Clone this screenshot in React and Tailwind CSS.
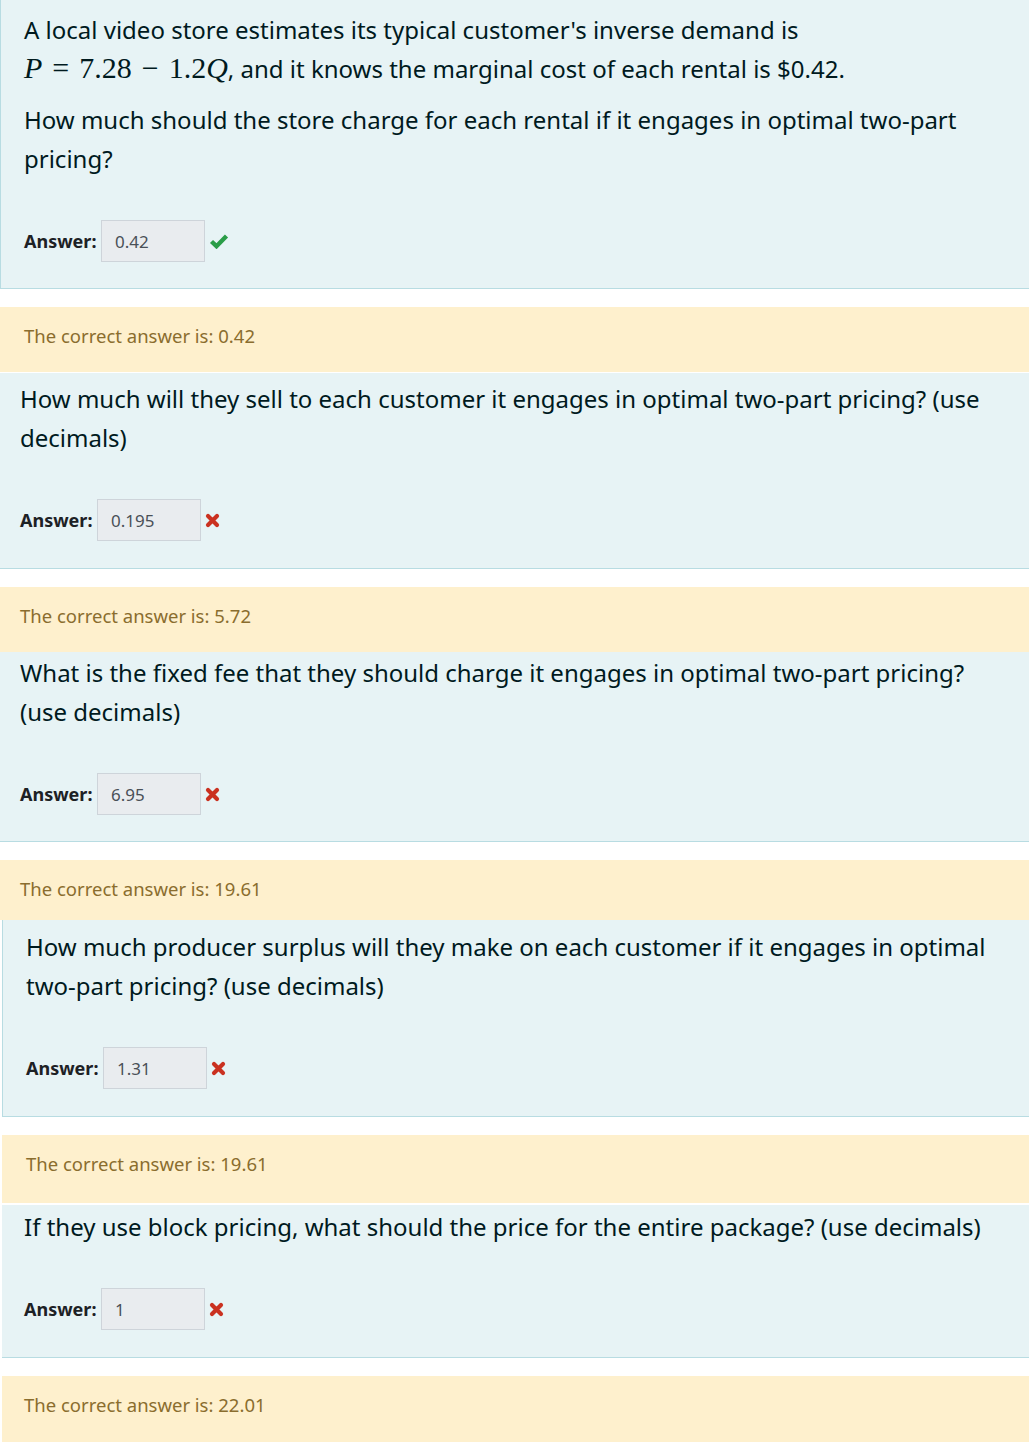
const SANS = { fontFamily: '"Noto Sans", "Open Sans", sans-serif' };
const MATH = { fontFamily: '"Liberation Serif", "DejaVu Serif", serif' };

function Check() {
  return (
    <svg width="20" height="16" viewBox="0 0 20 16" className="shrink-0">
      <path d="M2.5 8.5 L7.5 13.2 L17.5 3" fill="none" stroke="#2a9d48" strokeWidth="4.4" strokeLinecap="butt" strokeLinejoin="miter" />
    </svg>
  );
}

function Cross() {
  return (
    <svg width="15" height="15" viewBox="0 0 15 15" className="shrink-0">
      <path d="M3 3 L12 12 M12 3 L3 12" fill="none" stroke="#ca3120" strokeWidth="4.2" strokeLinecap="round" />
    </svg>
  );
}

function AnswerRow({ value, ok, top }) {
  return (
    <div className={`flex items-center ${top}`}>
      <span className="w-[77px] shrink-0 text-[18px] font-bold text-[#1d2125]">Answer:</span>
      <div className="w-[104px] h-[42px] shrink-0 flex items-center pl-[13px] bg-[#e9ecef] border border-[#ced4da] text-[17px] text-[#495057]">
        {value}
      </div>
      <div className="ml-[4px]">{ok ? <Check /> : <Cross />}</div>
    </div>
  );
}

function Feedback({ children, cls }) {
  return (
    <div className={`bg-[#fef0cd] text-[#8a6d2e] text-[18.5px] leading-[30px] pt-[14px] ${cls}`}>
      The correct answer is: {children}
    </div>
  );
}

export default function App() {
  return (
    <div className="w-[1029px] h-[1442px] overflow-hidden bg-white" style={SANS}>
      {/* Question 1 */}
      <div className="h-[289px] bg-[#e7f3f5] border-l border-b border-[#b8dce2] pt-[10px] pl-[23px] text-[24px] leading-[39px] text-[#001a1e]">
        <p>
          A local video store estimates its typical customer's inverse demand is
          <br />
          <span className="text-[30px] leading-[30px]" style={MATH}>
            <i>P</i>
            <span className="mx-[10px]">=</span>
            7.28
            <span className="mx-[10px]">−</span>
            1.2<i>Q</i>
          </span>
          , and it knows the marginal cost of each rental is $0.42.
        </p>
        <p className="mt-[12px]">
          How much should the store charge for each rental if it engages in optimal two-part
          <br />
          pricing?
        </p>
        <AnswerRow value="0.42" ok top="mt-[42px]" />
      </div>

      <Feedback cls="mt-[18px] h-[65px] pl-[24px]">0.42</Feedback>

      {/* Question 2 */}
      <div className="mt-[1px] h-[196px] bg-[#e7f3f5] border-b border-[#b8dce2] pt-[6px] pl-[20px] text-[24px] leading-[39px] text-[#001a1e]">
        <p>
          How much will they sell to each customer it engages in optimal two-part pricing? (use
          <br />
          decimals)
        </p>
        <AnswerRow value="0.195" top="mt-[42px]" />
      </div>

      <Feedback cls="mt-[18px] h-[65px] pl-[20px]">5.72</Feedback>

      {/* Question 3 */}
      <div className="h-[190px] bg-[#e7f3f5] border-b border-[#b8dce2] pt-[1px] pl-[20px] text-[24px] leading-[39px] text-[#001a1e]">
        <p>
          What is the fixed fee that they should charge it engages in optimal two-part pricing?
          <br />
          (use decimals)
        </p>
        <AnswerRow value="6.95" top="mt-[42px]" />
      </div>

      <Feedback cls="mt-[18px] h-[60px] pl-[20px]">19.61</Feedback>

      {/* Question 4 */}
      <div className="ml-[2px] h-[197px] bg-[#e7f3f5] border-l border-b border-[#b8dce2] pt-[7px] pl-[23px] text-[24px] leading-[39px] text-[#001a1e]">
        <p>
          How much producer surplus will they make on each customer if it engages in optimal
          <br />
          two-part pricing? (use decimals)
        </p>
        <AnswerRow value="1.31" top="mt-[42px]" />
      </div>

      <Feedback cls="ml-[2px] mt-[18px] h-[68px] pl-[24px]">19.61</Feedback>

      {/* Question 5 */}
      <div className="ml-[2px] mt-[2px] h-[153px] bg-[#e7f3f5] border-b border-[#b8dce2] pt-[2px] pl-[22px] text-[24px] leading-[39px] text-[#001a1e]">
        <p>If they use block pricing, what should the price for the entire package? (use decimals)</p>
        <AnswerRow value="1" top="mt-[42px]" />
      </div>

      <Feedback cls="ml-[2px] mt-[18px] h-[66px] pl-[22px]">22.01</Feedback>
    </div>
  );
}
